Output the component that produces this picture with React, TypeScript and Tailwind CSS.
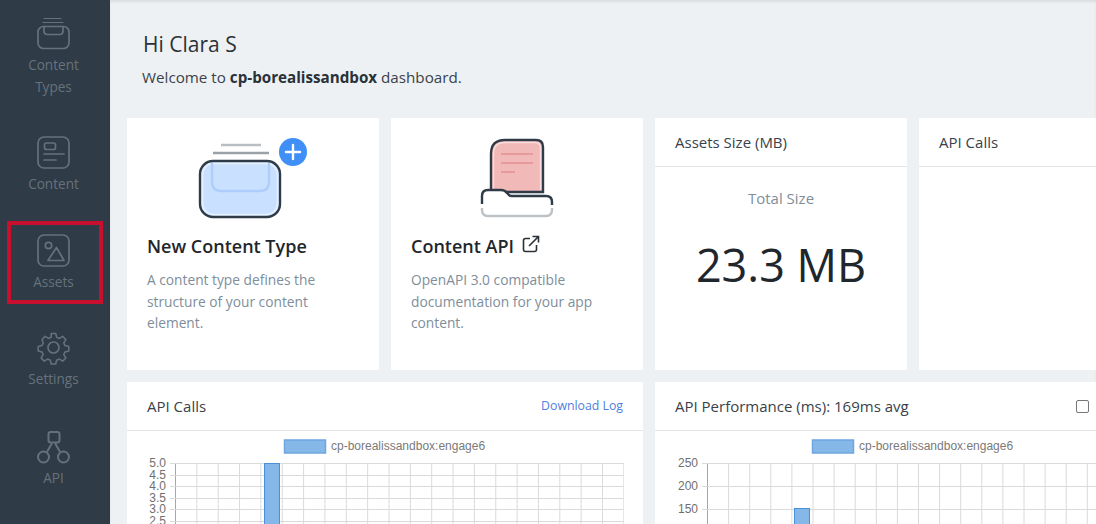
const font = "font-['Open_Sans',sans-serif]";

function SideIcon({ name }: { name: string }) {
  const common = { fill: "none", stroke: "#65727d", strokeWidth: 1.7, strokeLinecap: "round" as const, strokeLinejoin: "round" as const };
  return (
    <svg width="34" height="34" viewBox="0 0 34 34" {...common}>
      {name === "types" && (
        <>
          <path d="M7 1.5h17" strokeWidth="1.2" />
          <path d="M6 5.5h20" strokeWidth="1.2" />
          <rect x="1" y="9.5" width="31" height="22" rx="5.5" />
          <path d="M7 10v4q0 3.5 3.5 3.5h12q3.5 0 3.5-3.5v-4" />
        </>
      )}
      {name === "content" && (
        <>
          <rect x="1" y="1" width="31" height="31" rx="6" />
          <rect x="7.5" y="7" width="11" height="6.5" rx="2" />
          <path d="M7 18h20M7 24h12" />
        </>
      )}
      {name === "assets" && (
        <>
          <rect x="1" y="1" width="31" height="31" rx="6" />
          <circle cx="11.5" cy="11.5" r="3.2" />
          <path d="M11 26.5l8.5-13 7.5 13z" />
        </>
      )}
      {name === "settings" && (
        <>
          <circle cx="16.5" cy="16.5" r="5.5" />
          <path d="M14.5 1.5h5l1 4.2 3 1.3 3.7-2.3 3.5 3.5-2.3 3.7 1.3 3 4.2 1v5l-4.2 1-1.3 3 2.3 3.7-3.5 3.5-3.7-2.3-3 1.3-1 4.2h-5l-1-4.2-3-1.3-3.7 2.3-3.5-3.5 2.3-3.7-1.3-3-4.2-1v-5l4.2-1 1.3-3L4.3 8.2l3.5-3.5 3.7 2.3 3-1.3z" transform="translate(1.1 1.1) scale(0.905)" />
        </>
      )}
      {name === "api" && (
        <>
          <rect x="11.5" y="2" width="11" height="10.5" rx="2.2" strokeWidth="2" />
          <circle cx="6.5" cy="27" r="5.5" strokeWidth="2" />
          <circle cx="26.5" cy="27" r="5.5" strokeWidth="2" />
          <path d="M14.5 14l-4 7M18.5 14l4 7" strokeWidth="2" />
        </>
      )}
    </svg>
  );
}

function Sidebar() {
  return (
    <aside className="flex w-[110px] shrink-0 flex-col items-center bg-[#2f3b46] pr-[3px] text-[13.6px] leading-[22px] text-[#65727d]">
      <div className="mt-[17px] flex flex-col items-center">
        <SideIcon name="types" />
        <span className="mt-[3px] text-center">Content<br />Types</span>
      </div>
      <div className="mt-[38px] flex flex-col items-center">
        <SideIcon name="content" />
        <span className="mt-[3px]">Content</span>
      </div>
      <div className="ml-[3px] mt-[26px] flex h-[83px] w-[96px] flex-col items-center border-4 border-[#c8102e] pr-[3px] pt-[9px]">
        <SideIcon name="assets" />
        <span className="mt-[3px]">Assets</span>
      </div>
      <div className="mt-[27px] flex flex-col items-center">
        <SideIcon name="settings" />
        <span className="mt-[3px]">Settings</span>
      </div>
      <div className="mt-[40px] flex flex-col items-center">
        <SideIcon name="api" />
        <span className="mt-[3px]">API</span>
      </div>
    </aside>
  );
}

function TypeArt() {
  return (
    <svg width="110" height="82" viewBox="0 0 110 82" className="block">
      <path d="M23 7h40" stroke="#b9bec3" strokeWidth="2.4" />
      <path d="M15 15h56" stroke="#9aa1a7" strokeWidth="2.4" />
      <rect x="2" y="23" width="80" height="56" rx="13" fill="#c9e0fe" stroke="#2f3b46" strokeWidth="2.4" />
      <rect x="4.5" y="25.5" width="75" height="51" rx="11" fill="none" stroke="#e6f0ff" strokeWidth="1.6" />
      <path d="M14 25v19q0 9 9 9h39q9 0 9-9V25" fill="none" stroke="#aecdfb" strokeWidth="2.4" />
      <circle cx="95" cy="14" r="14" fill="#3f8ff7" />
      <path d="M95 7v14M88 14h14" stroke="#fff" strokeWidth="2.4" strokeLinecap="round" />
    </svg>
  );
}

function ApiArt() {
  return (
    <svg width="76" height="82" viewBox="0 0 76 82" className="block">
      <path d="M12 54V16Q12 2 26 2h31q7 0 7 7v45z" fill="#f2b9b9" stroke="#2f3b46" strokeWidth="2.4" />
      <path d="M14.5 52V16Q14.5 4.5 26 4.5h30q5.5 0 5.5 5.5v42" fill="none" stroke="#f9dcdc" strokeWidth="1.4" />
      <path d="M22 16h32M22 25h32M22 34h14" stroke="#e79a9a" strokeWidth="2.2" />
      <path d="M3 72V58q0-6 6-6h13q4 0 6 3l1 1q1 2 4 2h34q6 0 6 6v8q0 6-6 6H9q-6 0-6-6z" fill="#fff" />
      <path d="M3 66v-8q0-6 6-6h13q4 0 6 3l1 1q1 2 4 2h34q6 0 6 6v3" fill="none" stroke="#2f3b46" strokeWidth="2.4" />
      <path d="M3 70v2q0 6 6 6h58q6 0 6-6v-2" fill="none" stroke="#bdc2c6" strokeWidth="2.4" />
    </svg>
  );
}

function BarChart({ labels, rowHeight, bar, legendX, axisX, width, step }: {
  labels: string[]; rowHeight: number; bar: { x: number; y: number; w: number }; legendX: number; axisX: number; width: number; step: number;
}) {
  const top = 32;
  const right = axisX + Math.floor((width - axisX) / step) * step;
  const verticals = Array.from({ length: Math.ceil((width - axisX) / step) + 1 }, (_, i) => axisX + i * step);
  const font = "Liberation Sans, Arial, sans-serif";
  return (
    <svg width={width} height="93" viewBox={`0 0 ${width} 93`} className="block">
      <rect x={legendX + 0.5} y="9" width="41" height="13" fill="#85b7e8" stroke="#6ea6e0" strokeWidth="1.5" />
      <text x={legendX + 47} y="19" fontSize="12" fontFamily={font} fill="#7a7a7a">cp-borealissandbox:engage6</text>
      {verticals.map((x, i) => (
        <path key={x} d={`M${x + 0.5} ${top}V93`} stroke={i === 0 ? "#a6a6a6" : "#dadada"} />
      ))}
      {labels.map((l, i) => {
        const y = Math.round(top + i * rowHeight);
        return (
          <g key={l}>
            <path d={`M${axisX - 5} ${y + 0.5}H${right}`} stroke="#dadada" />
            <text x={axisX - 9} y={y + 4} textAnchor="end" fontSize="12" fontFamily={font} fill="#6f6f6f">{l}</text>
          </g>
        );
      })}
      <rect x={bar.x + 0.5} y={bar.y + 0.5} width={bar.w} height={93} fill="#85b7e8" stroke="#4a90d9" />
    </svg>
  );
}

function SmallCard({ children }: { children: React.ReactNode }) {
  return <div className="h-[252px] w-[252px] shrink-0 bg-white">{children}</div>;
}

function CardHead({ children }: { children: React.ReactNode }) {
  return (
    <div className="flex h-[49px] items-center justify-between border-b border-[#e3e6e9] px-5 text-[15px] text-[#39424a]">
      {children}
    </div>
  );
}

export default function App() {
  return (
    <div className={`${font} flex h-screen overflow-hidden bg-[#eef1f4]`}>
      <Sidebar />
      <main className="min-w-0 flex-1 overflow-hidden pl-[17px] shadow-[inset_0_2px_2px_rgba(0,0,0,0.08)]">
        <div className="pl-4 pt-[30px]">
          <h1 className="text-[21px] font-medium leading-[28px] text-[#2a3138]">Hi Clara S</h1>
          <p className="ml-[-1px] mt-[8px] text-[15.2px] leading-[22px] text-[#39424a]">
            Welcome to <b className="font-bold text-[#2a3138]">cp-borealissandbox</b> dashboard.
          </p>
        </div>

        <div className="mt-[30px] flex gap-3">
          <SmallCard>
            <div className="pl-[71px] pt-5"><TypeArt /></div>
            <div className="px-5 pt-[13px]">
              <h2 className="text-[18px] font-semibold leading-[26px] text-[#1f262c]">New Content Type</h2>
              <p className="mt-[10px] text-[13.75px] leading-[21.5px] text-[#7e8e9b]">
                A content type defines the<br />structure of your content<br />element.
              </p>
            </div>
          </SmallCard>
          <SmallCard>
            <div className="pl-[88px] pt-5"><ApiArt /></div>
            <div className="px-5 pt-[13px]">
              <h2 className="flex items-center gap-[8px] text-[18px] font-semibold leading-[26px] text-[#1f262c]">
                Content API
                <svg width="18" height="18" viewBox="0 0 18 18" fill="none" stroke="#2a3138" strokeWidth="1.6" className="mt-[-4px]">
                  <path d="M8 3.5H3.5q-2 0-2 2v9q0 2 2 2h9q2 0 2-2V10" />
                  <path d="M7 11L16 2M10.5 1.5h6v6" />
                </svg>
              </h2>
              <p className="mt-[10px] text-[13.75px] leading-[21.5px] text-[#7e8e9b]">
                OpenAPI 3.0 compatible<br />documentation for your app<br />content.
              </p>
            </div>
          </SmallCard>
          <SmallCard>
            <CardHead>Assets Size (MB)</CardHead>
            <p className="mt-[21px] text-center text-[15px] leading-[20px] text-[#7e8e9b]">Total Size</p>
            <p className="mt-[25px] text-center text-[45px] leading-[64px] text-[#1f262c]">23.3 MB</p>
          </SmallCard>
          <SmallCard>
            <CardHead>API Calls</CardHead>
          </SmallCard>
        </div>

        <div className="mt-3 flex gap-3">
          <div className="h-[200px] w-[516px] shrink-0 bg-white">
            <CardHead>
              API Calls
              <a className="text-[12.3px] text-[#4f7fe0]">Download Log</a>
            </CardHead>
            <BarChart labels={["5.0", "4.5", "4.0", "3.5", "3.0", "2.5"]} rowHeight={11.6} bar={{ x: 137, y: 32, w: 15 }} legendX={157} axisX={48} width={497} step={21.35} />
          </div>
          <div className="h-[200px] w-[516px] shrink-0 bg-white">
            <CardHead>
              <span>API Performance (ms): 169ms avg</span>
              <span className="mr-[62px] h-[13px] w-[13px] rounded-[2px] border border-[#767676] bg-white" />
            </CardHead>
            <BarChart labels={["250", "200", "150"]} rowHeight={23} bar={{ x: 139, y: 77, w: 15 }} legendX={157} axisX={52} width={516} step={21.1} />
          </div>
        </div>
      </main>
    </div>
  );
}
